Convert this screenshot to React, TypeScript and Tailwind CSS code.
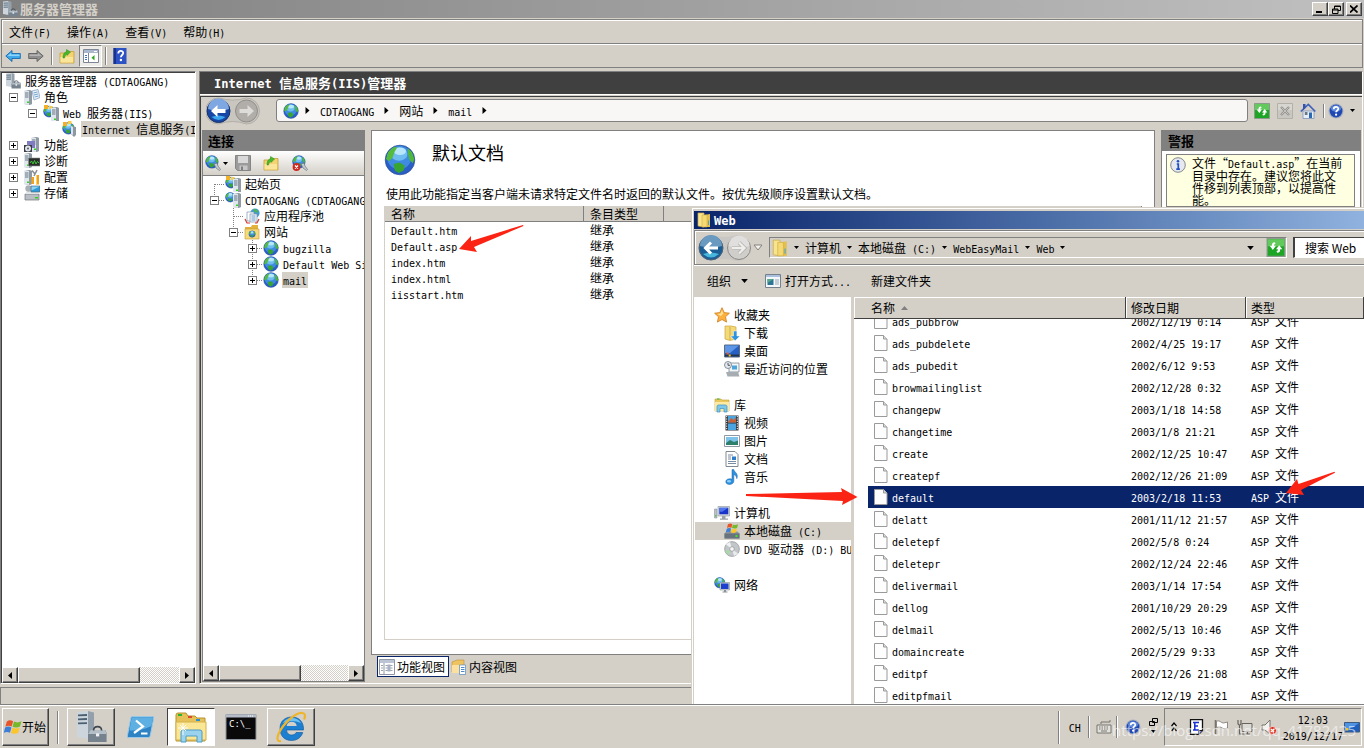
import React from 'react'

/* Latin runs use a 6px monospace so they line up as half of a 12px han character */
function Txt({ t, bold }: { t: string; bold?: boolean }) {
  return (
    <>
      {t.split(/([\x20-\x7e]+)/).filter(Boolean).map((part, i) =>
        /^[\x20-\x7e]+$/.test(part)
          ? <span key={i} className={bold ? "whitespace-pre font-['DejaVu_Sans_Mono',monospace] text-[12px] leading-none" : "whitespace-pre font-['DejaVu_Sans_Mono',monospace] text-[10px] leading-none"}>{part}</span>
          : part
      )}
    </>
  )
}

/* ---------- icons ---------- */

interface IconProps { className?: string }

function Svg({ children, className = 'h-4 w-4', box = '0 0 16 16' }: { children: React.ReactNode; className?: string; box?: string }) {
  return <svg viewBox={box} className={`shrink-0 ${className}`} aria-hidden="true">{children}</svg>
}

function GlobeShape() {
  return (
    <>
      <circle cx="8" cy="8" r="7.400" fill="#2a5fc6" />
      <circle cx="7.600" cy="6.800" r="6" fill="#3f8be0" />
      <ellipse cx="7.500" cy="5" rx="4.200" ry="3.400" fill="#6fbdf0" />
      <ellipse cx="8" cy="3.600" rx="3" ry="1.900" fill="#b8e6fa" />
      <path d="M1 7.500 2 4l3-2.600 1.600.4L5.200 4 4.400 6.600 2.600 8.600z" fill="#55bb3c" />
      <path d="M11.800 2 14 4l1.200 3.400-.8 2.200-1.600-1.600-.8-3z" fill="#4fb83a" />
      <path d="m4.800 10 3-.7 2.600 1.600-.6 2.400-2.400 1.200-2-1.200z" fill="#37a52f" />
      <circle cx="8" cy="8" r="7.400" fill="none" stroke="#2a4f9e" strokeWidth=".35" />
    </>
  )
}
const GlobeIcon = ({ className }: IconProps) => <Svg className={className}><GlobeShape /></Svg>

function Tower({ x = 0, y = 0 }: { x?: number; y?: number }) {
  return (
    <g transform={`translate(${x} ${y})`}>
      <path d="M0 1 5 0l3 1v13l-3 1-5-1z" fill="#9aa5b0" />
      <path d="M0 1h5v14l-5-1z" fill="#dfe6ec" />
      <path d="M5 0l3 1v13l-3 1z" fill="#8f9aa4" />
      <path d="M1 3h3.500M1 5h3.500M1 7h3.500" stroke="#5b6a78" strokeWidth=".9" />
      <path d="M3 11.500h2V13H3z" fill="#37d321" />
    </g>
  )
}

const ServerToolsIcon = ({ className }: IconProps) => (
  <Svg className={className}>
    <path d="M1 .5 6.500 0v14L1 13z" fill="#ccd5dc" /><path d="M6.500 0 9.500.7v12L6.500 14z" fill="#93a0ab" />
    <path d="M1.500 2.200 6 2M1.500 4.200 6 4M1.500 6.200 6 6.100" stroke="#4a6072" strokeWidth=".9" />
    <path d="m6.500 11 1.300-1.500h7.400l.6 1.500v4.500H6.500z" fill="#76838f" /><path d="m6.500 11.500 1.300-2h7.400l.6 2z" fill="#b3bec7" />
    <path d="M9.300 9.800q0-2 2-2t2 2" fill="none" stroke="#3f4852" strokeWidth=".8" /><path d="M10.500 11.200h1.600v1.500h-1.600z" fill="#eef2f4" />
  </Svg>
)
const RolesIcon = () => (
  <Svg><Tower x={0} y={1} /><path d="m8 2 6-1.500 2 8L10 11z" fill="#e6f1fb" stroke="#7d9ab8" strokeWidth=".7" /><path d="m9.500 4 4-1M10 6l4-1m-3.400 3 4-1" stroke="#5f8fc4" strokeWidth=".8" /></Svg>
)
const WebServerIcon = () => (
  <Svg>
    <g transform="translate(0 .5) scale(.76)"><GlobeShape /></g>
    <path d="M1 0h4v4H1z" fill="#f3b028" /><path d="M6 1h3.500v3H6z" fill="#f6ce4b" />
    <Tower x={8} y={2} />
  </Svg>
)
const IisManagerIcon = () => (
  <Svg>
    <g transform="translate(0 1) scale(.8)"><GlobeShape /></g>
    <path d="M1 1h4v4H1z" fill="#f3b028" /><path d="M6 0h3.500v3H6z" fill="#f6ce4b" />
    <path d="m9 5 5 1v8l-2 2-3-3z" fill="#8d98a3" /><path d="m9 5 2 1v8l-2-1z" fill="#dde3e8" />
  </Svg>
)
const SiteServerIcon = () => (
  <Svg><g transform="scale(.66)"><GlobeShape /></g><Tower x={8} y={1} /></Svg>
)
const FeaturesIcon = () => (
  <Svg><Tower x={7} y={0} /><path d="M3 4h8v7H3z" fill="#7f7cc4" /><path d="M0 8h8v7H0z" fill="#3a3a44" /><circle cx="4" cy="11.500" r="3" fill="#dfe3ea" /><circle cx="4" cy="11.500" r="1" fill="#555" /></Svg>
)
const DiagnosticsIcon = () => (
  <Svg><Tower x={0} y={0} /><path d="M4.500 5H16v8H4.500z" fill="#2a2d2a" stroke="#8c9196" strokeWidth=".6" /><path d="m6 10 1.500-2L9 11l1.500-3.500L12 11l1.500-2.500L15 10" fill="none" stroke="#3fd43a" strokeWidth=".9" /></Svg>
)
const ConfigIcon = () => (
  <Svg><Tower x={0} y={1} /><path d="M8 1.500 11 5M13 1l-3 6" stroke="#8b8f94" strokeWidth="1.600" /><path d="M7.500 8h2.500v7H7.500zM12 6h3v9.500h-3z" fill="#f0a41c" /><path d="M12 6h1v9.500h-1z" fill="#fbd26a" /></Svg>
)
const StorageIcon = () => (
  <Svg><path d="M1 9h14v6H1z" fill="#b8bec3" stroke="#6d757c" strokeWidth=".7" /><path d="m1 9 2-3h11l1 3z" fill="#e3e7ea" /><circle cx="4.500" cy="3.500" r="3.200" fill="#a9b0b6" /><path d="M7 1h9v6H7z" fill="#2e9bd8" stroke="#56616b" strokeWidth=".6" /><path d="M7.500 1.500h8l-8 4z" fill="#8fd3f3" /><path d="M11 12h3v1.500h-3z" fill="#37d321" /></Svg>
)
const AppPoolIcon = () => (
  <Svg><circle cx="11" cy="5" r="4.600" fill="#3f9bd6" /><path d="M9 1.500 12 1l2 3-2 1z" fill="#52b548" /><path d="M3 4h7v9H3z" fill="#fff" stroke="#7c94ad" strokeWidth=".7" /><path d="M6 6h7v8H6z" fill="#f4f8fc" stroke="#7c94ad" strokeWidth=".7" /><path d="M7.500 8h4m-4 2h4m-4 2h4" stroke="#4d7fb8" strokeWidth=".8" /><path d="m1 11 2 4h3M15 11l-2 4h-2" fill="none" stroke="#d33a2f" strokeWidth="1.200" /></Svg>
)
const SitesFolderIcon = () => (
  <Svg><path d="M1 3h6l1-2h6v14H1z" fill="#e2b23c" /><path d="M1 5h14v10H1z" fill="#f7d978" stroke="#c39a34" strokeWidth=".6" /><g transform="translate(4.500 6.500) scale(.45)"><GlobeShape /></g></Svg>
)
const FolderUpIcon = () => (
  <Svg><path d="M1 5h5l1-1.500h8V15H1z" fill="#f4d372" stroke="#c79f38" strokeWidth=".8" /><path d="M1.500 9H14v5.500H1.500z" fill="#fbe59b" /><path d="M4 10c0-4 1-5.500 3.500-6V1.500L11.500 4 8 7.500V6C6.500 6.500 6 8 5.500 10z" fill="#45b92c" stroke="#2d8a1c" strokeWidth=".5" /></Svg>
)
const ArrowLeftIcon = () => (
  <Svg><path d="M.8 8 7 2.500v3h8.300v5H7v3z" fill="#3ea8ea" stroke="#1669ad" strokeWidth=".9" /><path d="M2.500 8 6 5v1.500h8.500V8z" fill="#8fd4fa" /></Svg>
)
const ArrowRightIcon = () => (
  <Svg><path d="M15.200 8 9 2.500v3H.7v5H9v3z" fill="#8f8f8f" stroke="#606060" strokeWidth=".9" /><path d="M13.500 8 10 5v1.500H1.500V8z" fill="#b5b5b5" /></Svg>
)
const PanelIcon = ({ className }: IconProps) => (
  <Svg className={className}><path d="M.5 1.500h15v13H.5z" fill="#fff" stroke="#7d8798" /><path d="M1 2h14v3H1z" fill="#aab6cb" /><path d="M11 3.500h3" stroke="#fff" /><path d="M5.500 5v9" stroke="#7d8798" /><path d="M2 7.500h2M2 9.500h2M2 11.500h2" stroke="#4072c4" /><path d="M11.500 7v5.500l-3-2.700z" fill="#2fa41f" /></Svg>
)
const HelpBookIcon = () => (
  <Svg><path d="M1.500 0h13v16h-13z" fill="#2d52c4" /><path d="M1.500 0H4v16H1.500z" fill="#17338f" /><path d="M6.300 5.500c0-3.400 4.900-3.200 4.900-.5 0 2-2.300 2-2.300 4.300" fill="none" stroke="#fff" strokeWidth="1.800" /><circle cx="8.900" cy="12" r="1.200" fill="#fff" /></Svg>
)
const HelpRoundIcon = ({ className }: IconProps) => (
  <Svg className={className}><circle cx="8" cy="8" r="7.600" fill="#a9b0bd" /><circle cx="8" cy="8" r="6.400" fill="#1f48b4" /><ellipse cx="8" cy="5.500" rx="5" ry="3.300" fill="#5c87dc" /><path d="M5.700 6.200c0-3 4.600-2.900 4.600-.4 0 1.700-2.200 1.700-2.200 3.500" fill="none" stroke="#fff" strokeWidth="1.700" /><circle cx="8.100" cy="11.700" r="1.100" fill="#fff" /></Svg>
)
const InfoIcon = () => (
  <Svg><circle cx="8" cy="8" r="7.300" fill="#e6e9ef" stroke="#85898f" /><circle cx="8" cy="4.300" r="1.300" fill="#1f4fc0" /><path d="M6.800 7h1.500v5M6.300 12.200h3.600" fill="none" stroke="#1f4fc0" strokeWidth="1.700" /></Svg>
)
const ConnectIcon = ({ remove }: { remove?: boolean }) => (
  <Svg>
    <g transform="scale(.86)"><GlobeShape /></g>
    <path d="m9 9 3-1 1 3 2.500 3.500-1 1L11 13z" fill="#c2cbd2" stroke="#6d7780" strokeWidth=".7" />
    {remove && <><circle cx="4.500" cy="12" r="3.900" fill="#cf2a20" /><path d="m3 10.500 3 3m0-3-3 3" stroke="#fff" strokeWidth="1.300" /></>}
  </Svg>
)
const SaveIcon = () => (
  <Svg><path d="M.5.500h15v15h-13l-2-2z" fill="#9b9b9b" stroke="#858585" /><path d="M3 1h10v7H3z" fill="#d9d9d9" /><path d="M4.500 10.500h8V15h-8z" fill="#c6c6c6" /><path d="M6 11.500h2V15H6z" fill="#7f7f7f" /></Svg>
)
const RefreshIcon = ({ className }: IconProps) => (
  <Svg className={className}><path d="M.5.500h15v15H.5z" fill="#1da526" stroke="#8b9b8b" /><path d="M1 1h14v6H1z" fill="#62ca5c" /><path d="M7 3.500c-2 0-2.500 1-2.500 3H2.700L5.300 10 8 6.500H6.400c0-1 .1-1.500 1.200-1.500z" fill="#fff" /><path d="M9 12.500c2 0 2.500-1 2.500-3h1.800L10.700 6 8 9.500h1.600c0 1-.1 1.500-1.200 1.500z" fill="#fff" /></Svg>
)
const StopIcon = () => (
  <Svg><path d="M.5.500h15v15H.5z" fill="#c9c7c2" stroke="#b3b0aa" /><path d="M1 1h14v6H1z" fill="#d8d6d1" /><path d="m4 4 8 8m0-8-8 8" stroke="#969390" strokeWidth="2.400" /><path d="m4.500 4.500 7 7m0-7-7 7" stroke="#c9c7c2" strokeWidth=".9" /></Svg>
)
const HomeIcon = () => (
  <Svg><path d="M3 8h11v7.500H3z" fill="#e9eef6" stroke="#7e93b8" strokeWidth=".8" /><path d="m.8 8.500 7.500-7 7 7" fill="none" stroke="#3f62b8" strokeWidth="1.700" /><path d="M3 1h2.500v4L3 7z" fill="#3252ad" /><path d="M9 9.500h3V15H9z" fill="#2a68b4" /><path d="M4.800 9h2.700v3H4.800z" fill="#6b7785" /></Svg>
)
const FolderYellowIcon = ({ className = 'h-4 w-4' }: IconProps) => (
  <Svg className={className}><path d="M2 1h6v14l-6-1z" fill="#f8e38f" stroke="#cfae49" strokeWidth=".7" /><path d="m8 3 6-1v13H8z" fill="#e3bf4d" /><path d="M6 3h5v12H6z" fill="#f5d972" stroke="#cfae49" strokeWidth=".6" /><path d="M12 8.500h1V13h-1z" fill="#4ca5c9" /></Svg>
)
const StarIcon = () => (
  <Svg><path d="m8 .7 2.200 4.900 5.200.6-3.900 3.600 1.100 5.300L8 12.500l-4.600 2.600 1.100-5.300L.6 6.200l5.200-.6z" fill="#fcb040" stroke="#d07c18" strokeWidth=".8" /><path d="m8 3 1.300 3.500L7 9 3.500 7l3-.6z" fill="#fee29a" /></Svg>
)
const DownloadIcon = () => (
  <Svg><path d="M1 1h6l5 1v12l-6 1.500L1 14z" fill="#f4d977" stroke="#c9a440" strokeWidth=".7" /><path d="M6 2v13" stroke="#c9a440" strokeWidth=".8" /><path d="M9.500 6h3.400v5H16l-4.800 4.800L6.500 11h3z" fill="#2b93df" stroke="#fff" strokeWidth=".5" /></Svg>
)
const DesktopIcon = () => (
  <Svg><path d="M.5 2h15v12H.5z" fill="#2560c4" stroke="#5e6c80" /><path d="M1 2.500h14L6 10H1z" fill="#5d96e6" /><path d="M1 11.500h14v2H1z" fill="#23344f" /><path d="M2.500 9.500h2.200v2H2.500z" fill="#ef5a28" /><path d="M4.700 11.500h2v2h-2z" fill="#f8c722" /></Svg>
)
const RecentIcon = () => (
  <Svg><path d="M5 2h10v9H5z" fill="#f2f5f7" stroke="#7d8790" strokeWidth=".8" /><path d="M8 4.500h5v4H8z" fill="#4fa4d8" /><path d="M2 11h12l1.500 4.500h-12z" fill="#a5acb2" /><circle cx="4" cy="4" r="3.500" fill="#e2e9ee" stroke="#7d8790" strokeWidth=".9" /><path d="M4 2v2.300h2" fill="none" stroke="#334" strokeWidth=".8" /></Svg>
)
const LibraryIcon = ({ className }: IconProps) => (
  <Svg className={className}><path d="M1 2h6l1 1h7v11H1z" fill="#ecc95c" stroke="#c09a3a" strokeWidth=".6" /><path d="M1 5h14v9H1z" fill="#fbe9a4" /><path d="M3 1.500h2.500v1H3z" fill="#35b546" /><path d="M3 15V9.500q0-1.500 1.500-1.500h7Q13 8 13 9.500V15h-3v-3.500H6V15z" fill="#7cc7ec" stroke="#3d92c4" strokeWidth=".7" /></Svg>
)
const VideoIcon = () => (
  <Svg><path d="M1.500.5h13v15h-13z" fill="#30343a" /><path d="M4 1h8v6.500H4zM4 8.500h8V15H4z" fill="#49a4e0" /><path d="m4 7 3-4 3 2 2-3v5.500H4z" fill="#ca5f33" /><path d="M2.700 1v14M13.300 1v14" stroke="#fff" strokeDasharray="1.200 1.200" /></Svg>
)
const PictureIcon = () => (
  <Svg><path d="M.5 2.500h15v11H.5z" fill="#fff" stroke="#8e99a4" /><path d="M2 4h12v8H2z" fill="#7fc3ea" /><path d="m2 10 4-3 4 2 4-1.500V12H2z" fill="#2e7f6c" /></Svg>
)
const DocumentIcon = () => (
  <Svg><path d="M2 .5h9l3 3v12H2z" fill="#fff" stroke="#7f8993" /><path d="M4 4h5M4 6h3M4 8h3M4 10.500h8M4 12.500h8" stroke="#6b7f9a" strokeWidth=".9" /><path d="M8 5.500h4v3.500H8z" fill="#2f7dc8" /></Svg>
)
const MusicIcon = () => (
  <Svg><path d="M8 .5h1.800c.4 2.800 5 3.700 3 9.200-.1-2.600-1.600-3.700-3-3.900v6.500c0 4-8 4.200-8 .5 0-2.800 3.800-3.600 6.200-2.500z" fill="#2d8fdd" stroke="#1766ad" strokeWidth=".5" /><ellipse cx="5" cy="12.200" rx="2" ry="1.300" fill="#8ed0f8" /></Svg>
)
const ComputerIcon = () => (
  <Svg><path d="M.5 4H3v9H.5z" fill="#b9c0c6" stroke="#808890" strokeWidth=".5" /><path d="M1.300 10h1v1.500h-1z" fill="#37c321" /><path d="M4 1.500h11.500v9.500H4z" fill="#d8dcdf" stroke="#8a9299" strokeWidth=".6" /><path d="M5.300 2.800h9v6.500h-9z" fill="#1733c8" /><path d="M5.300 2.800h9l-6 4h-3z" fill="#4f74ec" /><path d="M8 11h3.500v2.500H14v1.300H6v-1.300h2z" fill="#9aa1a7" /></Svg>
)
const DiskIcon = () => (
  <Svg><path d="m.5 10.500 2-2h11l2 2v5H.5z" fill="#8d959c" /><path d="M.5 10.500h15v5H.5z" fill="#68737d" /><path d="M11.500 12h2v2h-2z" fill="#3fe52a" /><g transform="translate(2 -1) scale(.78)"><WindowsFlag /></g></Svg>
)
const DvdIcon = () => (
  <Svg><circle cx="8" cy="8" r="7.400" fill="#c3c6c9" stroke="#8f9498" strokeWidth=".7" /><path d="M8 8 2 3.500A7.400 7.400 0 0 1 6 1z" fill="#eef0f1" /><path d="m8 8 6 4.500a7.400 7.400 0 0 1-4 2.500z" fill="#e9ebed" /><path d="m1 10 4-1 1 2-2 3z" fill="#a8d8a8" /><circle cx="8" cy="8" r="2.300" fill="#f7f7f7" stroke="#8f9498" strokeWidth=".7" /></Svg>
)
const NetworkIcon = () => (
  <Svg><g transform="scale(.72)"><GlobeShape /></g><path d="M6 5.500h9.500V13H6z" fill="#cfd4d8" stroke="#8a9299" strokeWidth=".6" /><path d="M7 6.500h7.500V12H7z" fill="#1d3fce" /><path d="M10 13h2v1.500h1.500v1h-5v-1H10z" fill="#8a9299" /></Svg>
)
const OpenWithIcon = () => (
  <Svg><path d="M.5 1.500h15v13H.5z" fill="#f4f7fa" stroke="#76808c" /><path d="M1 2h14v2H1z" fill="#a9c1de" /><path d="M2.500 6h6v6h-6z" fill="#2d7592" /><path d="M2.500 6h6l-6 4z" fill="#57a88b" /><path d="M10 7h4m-4 2h4m-4 2h4" stroke="#98a6b6" /></Svg>
)
const FileIcon = () => (
  <Svg className="h-4 w-3.5" box="0 0 14 16"><path d="M.5.500h9l3.500 3.500v11.500H.5z" fill="#fdfdfd" stroke="#9a9a9a" /><path d="M9.500.500V4H13" fill="#d9d9d9" stroke="#9a9a9a" /></Svg>
)
const FeatureViewIcon = () => (
  <Svg><path d="M.5.500h15v15H.5z" fill="#fff" stroke="#8f97a6" /><path d="M1 1h14v3H1z" fill="#bcc5d6" /><path d="M5 4v11" stroke="#8f97a6" /><path d="M2 6.500h2M2 9h2M2 11.500h2M6.500 6.500h7M6.500 9h7m-7 2.500h7" stroke="#9aa3b2" /><path d="M8.500 5.500h3v7h-3z" fill="#a8b2c2" /></Svg>
)
const ContentViewIcon = () => (
  <Svg><path d="M1 3 6 1h7v12H1z" fill="#eec463" stroke="#c08f35" strokeWidth=".6" /><path d="M1 6h10v8H1z" fill="#fbe0a0" /><path d="M8.500 6h6v9.500h-6z" fill="#fff" stroke="#5588bb" strokeWidth=".7" /><path d="M10 8.500h3.500M10 10.500h3.500M10 12.500h3.500" stroke="#3c7dc4" strokeWidth=".9" /></Svg>
)

function WindowsFlag() {
  return (
    <>
      <path d="M2.500 3c2-1.300 3.600-1.200 5.600-.2L6.800 7.600C4.900 6.600 3.200 6.600 1.200 7.700z" fill="#e8542a" />
      <path d="M8.900 3.200c2 1 4 1 6.600-.3l-1.300 4.700c-2.500 1.200-4.600 1-6.600.2z" fill="#76b82a" />
      <path d="M1 8.500c2-1.100 3.700-1.100 5.600-.1l-1.300 4.800c-1.900-1-3.600-1-5.600.1z" fill="#3d7fd6" />
      <path d="M7.400 8.600c2 .9 4 1 6.600-.2l-1.300 4.800c-2.400 1.200-4.600 1-6.600.1z" fill="#fbc52d" />
    </>
  )
}

function NavArrows() {
  return (
    <svg viewBox="0 0 54 28" className="h-7 w-[54px] shrink-0" aria-hidden="true">
      <path d="M12.500 1q14 4 28 0a13 13 0 0 1 0 26q-14-5-28 0a13 13 0 0 1 0-26z" fill="#c9c6c0" stroke="#aaa7a1" strokeWidth=".8" />
      <circle cx="12.500" cy="14" r="11.500" fill="#1746a5" stroke="#163268" />
      <path d="M2 12a10.500 10.500 0 0 1 21 0q-10.500 4-21 0z" fill="#7fa7e2" />
      <path d="M5.500 20q7 6 14 0-7-3-14 0z" fill="#39a6ef" />
      <path d="m5 14 6.500-6v4h8v4h-8v4z" fill="#fff" />
      <circle cx="40.500" cy="14" r="11" fill="#b1aeaa" stroke="#918e89" />
      <path d="m48 14-6.500-6v4h-8v4h8v4z" fill="#dedcd8" />
    </svg>
  )
}

function ExplorerArrows() {
  return (
    <svg viewBox="0 0 54 28" className="h-7 w-[54px] shrink-0" aria-hidden="true">
      <path d="M14 1q13 4 26 0a13 13 0 0 1 0 26q-13-4-26 0a13 13 0 0 1 0-26z" fill="#c9c7c3" />
      <circle cx="14" cy="14" r="12" fill="#1b5e94" stroke="#4f6378" />
      <path d="M3 12a11 11 0 0 1 22 0q-11 3-22 0z" fill="#6a9ac0" />
      <path d="M6 20q8 7 16 0-8-3-16 0z" fill="#47b6dd" />
      <path d="M21 14H9m5-5.500L8.500 14l5.500 5.500" fill="none" stroke="#fff" strokeWidth="3" />
      <circle cx="42" cy="14" r="11.500" fill="#cfcecb" stroke="#8b8985" />
      <path d="M31.500 12a10.500 10.500 0 0 1 21 0q-10.500 3-21 0z" fill="#e0dfdd" />
      <path d="M35 14h12m-5-5.500 5.500 5.500-5.500 5.500" fill="none" stroke="#a9a7a3" strokeWidth="3.600" />
      <path d="M35 14h12m-5-5.500 5.500 5.500-5.500 5.500" fill="none" stroke="#efeeec" strokeWidth="2.400" />
    </svg>
  )
}

const CaretRight = () => <Svg className="h-[7px] w-[5px]" box="0 0 5 7"><path d="M.5 0v7L4.500 3.500z" fill="#000" /></Svg>
const CaretDown = ({ className = 'h-[3px] w-[5px]' }: IconProps) => <Svg className={className} box="0 0 5 3"><path d="M0 0h5L2.500 3z" fill="#000" /></Svg>

/* ---------- shared pieces ---------- */

const raised = 'border border-t-white border-l-white border-r-[#404040] border-b-[#404040] shadow-[inset_-1px_-1px_0_#808080]'
const sunken = 'border border-t-[#808080] border-l-[#808080] border-r-white border-b-white'

function Sep({ className = 'h-[15px]' }: IconProps) {
  return <div className={`w-0.5 shrink-0 border-r border-l border-r-white border-l-[#808080] ${className}`} />
}

/* A cell is a set of marks: + or - for the box, u/d/r for the dotted lines */
function TreeCell({ marks }: { marks: string }) {
  const has = (m: string) => marks.includes(m)
  return (
    <svg viewBox="0 0 19 16" className="h-4 w-[19px] shrink-0" shapeRendering="crispEdges" aria-hidden="true">
      <g stroke="#808080" strokeDasharray="1 1">
        {has('u') && <path d="M9.500 0v8" />}
        {has('d') && <path d="M9.500 8v8" />}
        {has('r') && <path d="M10 8.500h9" />}
      </g>
      {(has('+') || has('-')) && (
        <>
          <rect x="5.500" y="4.500" width="8" height="8" fill="#fff" stroke="#808080" />
          <path d="M7 8.500h5" stroke="#000" />
          {has('+') && <path d="M9.500 6v5" stroke="#000" />}
        </>
      )}
    </svg>
  )
}

interface TreeNode { cells: string[]; icon: React.ReactNode; label: string; selected?: boolean }

function Tree({ nodes }: { nodes: TreeNode[] }) {
  return (
    <ul className="min-h-0 flex-1 overflow-hidden pl-0.5">
      {nodes.map((n, i) => (
        <li key={i} className="flex h-4 items-center whitespace-nowrap">
          {n.cells.map((c, j) => <TreeCell key={j} marks={c} />)}
          <span className="ml-px flex">{n.icon}</span>
          <span className={n.selected ? 'ml-[3px] h-4 bg-[#d4d0c8] px-px' : 'ml-[3px] h-4 px-px'}><Txt t={n.label} /></span>
        </li>
      ))}
    </ul>
  )
}

function ScrollBar({ thumb }: { thumb: string }) {
  return (
    <div className="flex h-4 shrink-0 [background:repeating-conic-gradient(#fff_0_25%,#d4d0c8_0_50%)_0_0/2px_2px]">
      <button aria-label="向左滚动" className={`flex w-4 items-center justify-center bg-[#d4d0c8] ${raised}`}>
        <Svg className="h-[7px] w-1" box="0 0 4 7"><path d="M4 0v7L0 3.500z" /></Svg>
      </button>
      <div className={`bg-[#d4d0c8] ${raised} ${thumb}`} />
      <button aria-label="向右滚动" className={`ml-auto flex w-4 items-center justify-center bg-[#d4d0c8] ${raised}`}>
        <Svg className="h-[7px] w-1" box="0 0 4 7"><path d="M0 0v7l4-3.500z" /></Svg>
      </button>
    </div>
  )
}

/* ---------- data ---------- */

const serverTree: TreeNode[] = [
  { cells: [], icon: <ServerToolsIcon />, label: '服务器管理器 (CDTAOGANG)' },
  { cells: ['-'], icon: <RolesIcon />, label: '角色' },
  { cells: ['', '-'], icon: <WebServerIcon />, label: 'Web 服务器(IIS)' },
  { cells: ['', '', ''], icon: <IisManagerIcon />, label: 'Internet 信息服务(IIS)管理器', selected: true },
  { cells: ['+'], icon: <FeaturesIcon />, label: '功能' },
  { cells: ['+'], icon: <DiagnosticsIcon />, label: '诊断' },
  { cells: ['+'], icon: <ConfigIcon />, label: '配置' },
  { cells: ['+'], icon: <StorageIcon />, label: '存储' },
]

const siteTree: TreeNode[] = [
  { cells: ['dr'], icon: <WebServerIcon />, label: '起始页' },
  { cells: ['-ur'], icon: <SiteServerIcon />, label: 'CDTAOGANG (CDTAOGANG\\administrator)' },
  { cells: ['', 'udr'], icon: <AppPoolIcon />, label: '应用程序池' },
  { cells: ['', '-ur'], icon: <SitesFolderIcon />, label: '网站' },
  { cells: ['', '', '+udr'], icon: <GlobeIcon />, label: 'bugzilla' },
  { cells: ['', '', '+udr'], icon: <GlobeIcon />, label: 'Default Web Site' },
  { cells: ['', '', '+ur'], icon: <GlobeIcon />, label: 'mail', selected: true },
]

const defaultDocs = ['Default.htm', 'Default.asp', 'index.htm', 'index.html', 'iisstart.htm']

const places = [
  [
    { icon: <StarIcon />, label: '收藏夹' },
    { icon: <DownloadIcon />, label: '下载', child: true },
    { icon: <DesktopIcon />, label: '桌面', child: true },
    { icon: <RecentIcon />, label: '最近访问的位置', child: true },
  ],
  [
    { icon: <LibraryIcon />, label: '库' },
    { icon: <VideoIcon />, label: '视频', child: true },
    { icon: <PictureIcon />, label: '图片', child: true },
    { icon: <DocumentIcon />, label: '文档', child: true },
    { icon: <MusicIcon />, label: '音乐', child: true },
  ],
  [
    { icon: <ComputerIcon />, label: '计算机' },
    { icon: <DiskIcon />, label: '本地磁盘 (C:)', child: true, selected: true },
    { icon: <DvdIcon />, label: 'DVD 驱动器 (D:) BUILD', child: true },
  ],
  [{ icon: <NetworkIcon />, label: '网络' }],
] as { icon: React.ReactNode; label: string; child?: boolean; selected?: boolean }[][]

const files = [
  ['ads_pubbrow', '2002/12/19 0:14'],
  ['ads_pubdelete', '2002/4/25 19:17'],
  ['ads_pubedit', '2002/6/12 9:53'],
  ['browmailinglist', '2002/12/28 0:32'],
  ['changepw', '2003/1/18 14:58'],
  ['changetime', '2003/1/8 21:21'],
  ['create', '2002/12/25 10:47'],
  ['createpf', '2002/12/26 21:09'],
  ['default', '2003/2/18 11:53'],
  ['delatt', '2001/11/12 21:57'],
  ['deletepf', '2002/5/8 0:24'],
  ['deletepr', '2002/12/24 22:46'],
  ['delivermail', '2003/1/14 17:54'],
  ['dellog', '2001/10/29 20:29'],
  ['delmail', '2002/5/13 10:46'],
  ['domaincreate', '2002/5/29 9:33'],
  ['editpf', '2002/12/26 21:08'],
  ['editpfmail', '2002/12/19 23:21'],
]

/* ---------- server manager ---------- */

function TitleBar() {
  const btn = `flex h-3.5 w-4 items-center justify-center bg-[#d4d0c8] ${raised}`
  return (
    <header className="flex h-[18px] shrink-0 items-center bg-linear-to-r from-[#808080] to-[#c0c0c0] pr-0.5 pl-0.5">
      <ServerToolsIcon />
      <h1 className="ml-0.5 flex-1 text-[13px] leading-4 font-bold text-[#d4d0c8]">服务器管理器</h1>
      <button aria-label="最小化" className={btn}><Svg className="h-2 w-2" box="0 0 8 8"><path d="M0 6h6v2H0z" /></Svg></button>
      <button aria-label="还原" className={btn}><Svg className="h-[9px] w-[9px]" box="0 0 9 9"><path d="M2.500 1h6v4.500H6M2.500 1v3M.5 4h5.500v4.500H.5zM.5 5H6M2.500 1.500h6" fill="none" stroke="#000" /></Svg></button>
      <button aria-label="关闭" className={`ml-0.5 ${btn}`}><Svg className="h-2 w-2" box="0 0 8 8"><path d="m0 .5 7.500 7m0-7-7.500 7" stroke="#000" strokeWidth="1.700" /></Svg></button>
    </header>
  )
}

function MenuAndTools() {
  return (
    <div className="mx-px mt-px shrink-0 border border-[#808080]">
      <nav className="flex h-[23px] items-center gap-4 border-t border-l border-white pl-1.5">
        {['文件(F)', '操作(A)', '查看(V)', '帮助(H)'].map(m => <button key={m}><Txt t={m} /></button>)}
      </nav>
      <div className="flex h-6 items-center border-t border-[#808080] pl-[3px] shadow-[inset_0_1px_0_#fff]">
        <button aria-label="后退"><ArrowLeftIcon /></button>
        <button aria-label="前进" className="ml-[7px]"><ArrowRightIcon /></button>
        <Sep className="ml-[7px] h-[18px]" />
        <button aria-label="向上一级" className="ml-1.5"><FolderUpIcon /></button>
        <button aria-label="显示控制台树" className={`ml-1 flex h-[22px] w-[23px] items-center justify-center bg-[#eeece8] ${sunken}`}><PanelIcon /></button>
        <Sep className="ml-[3px] h-[18px]" />
        <button aria-label="帮助" className="ml-[5px]"><HelpBookIcon /></button>
      </div>
    </div>
  )
}

function IisNav() {
  return (
    <div className="mb-1.5 flex h-[27px] shrink-0 items-center pr-1.5 pl-1">
      <NavArrows />
      <div className="ml-4 flex h-[23px] flex-1 items-center rounded-[3px] border border-[#808080] bg-[#f8f7f5] pl-1.5">
        <GlobeIcon className="-mr-1 h-4 w-4" />
        {['CDTAOGANG', '网站', 'mail'].map(c => (
          <React.Fragment key={c}>
            <span className="flex w-[25px] justify-center"><CaretRight /></span>
            <button className="h-4"><Txt t={c} /></button>
          </React.Fragment>
        ))}
        <span className="flex w-[25px] justify-center"><CaretRight /></span>
      </div>
      <div className="ml-1.5 flex items-center gap-[7px]">
        <button aria-label="刷新"><RefreshIcon /></button>
        <button aria-label="停止"><StopIcon /></button>
        <button aria-label="主页"><HomeIcon /></button>
        <Sep className="h-3.5" />
      </div>
      <button aria-label="帮助" className="ml-[3px] flex items-center gap-1.5"><HelpRoundIcon /><CaretDown /></button>
    </div>
  )
}

function Connections() {
  return (
    <section className="flex w-[163px] shrink-0 flex-col border border-[#808080] bg-white">
      <h2 className="h-5 shrink-0 bg-[#808080] pl-[5px] text-[13px] leading-5 font-bold">连接</h2>
      <div className="flex h-[25px] shrink-0 items-center border-b border-[#808080] bg-linear-to-b from-white to-[#d4d0c8] pl-0.5">
        <button aria-label="连接到" className="flex items-center gap-0.5"><ConnectIcon /><CaretDown /></button>
        <button aria-label="保存连接" className="ml-[7px]"><SaveIcon /></button>
        <Sep className="ml-[7px]" />
        <button aria-label="向上" className="ml-[3px]"><FolderUpIcon /></button>
        <Sep className="ml-2" />
        <button aria-label="删除连接" className="ml-[3px]"><ConnectIcon remove /></button>
      </div>
      <Tree nodes={siteTree} />
      <ScrollBar thumb="w-[82px]" />
    </section>
  )
}

function DefaultDocuments() {
  const head = 'h-4 border-r border-b border-[#808080] pl-1.5 text-left leading-[15px] font-normal'
  return (
    <section className="flex min-w-0 flex-1 flex-col">
      <div className="flex min-h-0 flex-1 flex-col border border-[#808080] bg-white px-3 pt-[13px] pb-3.5">
        <div className="flex h-8 gap-4">
          <GlobeIcon className="h-8 w-8" />
          <h2 className="text-[18px] leading-4">默认文档</h2>
        </div>
        <p className="mt-2.5 mb-1 pl-0.5 whitespace-nowrap">使用此功能指定当客户端未请求特定文件名时返回的默认文件。按优先级顺序设置默认文档。</p>
        <div className="min-h-0 flex-1 border-b border-l border-[#d4d0c8]">
          <table className="w-full table-fixed border-separate border-spacing-0">
            <thead className="bg-[#d4d0c8]">
              <tr><th className={`w-[199px] ${head}`}>名称</th><th className={`w-20 ${head}`}>条目类型</th><th className={head} /></tr>
            </thead>
            <tbody>
              {defaultDocs.map(d => (
                <tr key={d} className="h-4">
                  <td className="p-0 pl-1.5"><div className="h-4"><Txt t={d} /></div></td>
                  <td className="p-0 pl-1.5"><div className="h-4">继承</div></td>
                  <td className="p-0" />
                </tr>
              ))}
            </tbody>
          </table>
        </div>
      </div>
      <div className="flex h-[27px] shrink-0 items-center gap-0.5 pb-1.5 pl-1.5">
        <button className="mt-0.5 flex h-[21px] items-center gap-0.5 border border-[#0a246a] bg-white pr-[3px] pl-px"><FeatureViewIcon />功能视图</button>
        <button className="mt-0.5 flex h-[21px] items-center gap-0.5"><ContentViewIcon />内容视图</button>
      </div>
    </section>
  )
}

function Alerts() {
  return (
    <aside className="mb-[27px] w-[200px] shrink-0 border border-[#808080] bg-white">
      <h2 className="h-5 bg-[#808080] pl-1.5 text-[13px] leading-5 font-bold">警报</h2>
      <div className="mt-[3px] mr-[5px] ml-1 flex gap-1.5 border border-[#808080] bg-[#ffffe1] pt-0.5 pr-2.5 pl-[3px]">
        <InfoIcon />
        <p className="leading-3"><Txt t="文件“Default.asp”在当前目录中存在。建议您将此文件移到列表顶部，以提高性能。" /></p>
      </div>
    </aside>
  )
}

/* ---------- explorer window ---------- */

function ExplorerNav() {
  return (
    <div className="flex h-[35px] shrink-0 items-center border-t border-b border-l border-[#808080] pl-0.5 shadow-[inset_1px_1px_0_#fff,0_1px_0_#fff]">
      <ExplorerArrows />
      <button aria-label="最近的页面" className="ml-0.5"><Svg className="h-2 w-2.5" box="0 0 10 8"><path d="M1 1h8L5 6z" fill="#f4f3f0" stroke="#85827c" /></Svg></button>
      <div className={`ml-1.5 flex h-[21px] flex-1 items-center pl-px ${sunken}`}>
        <FolderYellowIcon className="h-[18px] w-[18px]" />
        <span className="flex w-2.5 justify-end"><CaretDown /></span>
        {['计算机', '本地磁盘 (C:)', 'WebEasyMail', 'Web'].map(c => (
          <button key={c} className="flex items-center gap-1.5 pl-1.5"><span className="h-4"><Txt t={c} /></span><CaretDown /></button>
        ))}
        <button aria-label="以前的位置" className="mr-3 ml-auto"><CaretDown className="h-1 w-[7px]" /></button>
        <button aria-label="刷新"><RefreshIcon className="h-[19px] w-5" /></button>
      </div>
      <input aria-label="搜索" placeholder="搜索 Web" className="ml-1.5 h-[21px] w-[71px] shrink-0 border-t border-b border-l-2 border-t-[#404040] border-b-white border-l-[#404040] bg-white pl-2.5 outline-none placeholder:text-black" />
    </div>
  )
}

function Places() {
  return (
    <nav className="flex w-[157px] shrink-0 flex-col gap-[18px] overflow-hidden bg-white pt-[9px] pl-px">
      {places.map((group, i) => (
        <ul key={i}>
          {group.map(p => (
            <li key={p.label} className={p.selected ? 'bg-[#d4d0c8]' : ''}>
              <a href="#" className={p.child ? 'flex h-[18px] items-center gap-1 pl-[29px] whitespace-nowrap' : 'flex h-[18px] items-center gap-1 pl-[19px] whitespace-nowrap'}>
                {p.icon}<span><Txt t={p.label} /></span>
              </a>
            </li>
          ))}
        </ul>
      ))}
    </nav>
  )
}

function FileList() {
  const head = 'h-[22px] border-r border-b border-r-[#404040] border-b-[#404040] p-0 pl-[5px] text-left font-normal shadow-[inset_1px_1px_0_#fff]'
  return (
    <section className="flex min-w-0 flex-1 flex-col bg-white">
      <table className="w-full table-fixed border-separate border-spacing-0 bg-[#d4d0c8]">
        <thead>
          <tr>
            <th className={`w-[272px] ${head}`}><span className="flex items-center gap-1.5 pl-3">名称<Svg className="h-1 w-[7px]" box="0 0 7 4"><path d="M0 4h7L3.500 0z" fill="#808080" /></Svg></span></th>
            <th className={`w-[120px] ${head}`}>修改日期</th>
            <th className={head}>类型</th>
          </tr>
        </thead>
      </table>
      <div className="min-h-0 flex-1 overflow-hidden pl-3.5">
        <table className="-mt-[9px] w-full table-fixed border-collapse">
          <tbody>
            {files.map(([name, date]) => (
              <tr key={name} className={name === 'default' ? 'h-[22px] bg-[#0a246a] text-white' : 'h-[22px]'}>
                <td className="w-[258px] p-0 pl-1.5"><span className="flex items-center gap-1"><FileIcon /><span><Txt t={name} /></span></span></td>
                <td className="w-[120px] p-0 pl-[5px]"><Txt t={date} /></td>
                <td className="p-0 pl-[5px]"><Txt t="ASP 文件" /></td>
              </tr>
            ))}
          </tbody>
        </table>
      </div>
    </section>
  )
}

function Explorer() {
  return (
    <div className="absolute top-[207px] right-0 bottom-0 left-[691px] flex flex-col border-t border-l border-[#d4d0c8] bg-[#d4d0c8] pt-[3px] pl-0.5 shadow-[inset_1px_1px_0_#fff]">
      <header className="flex h-[18px] shrink-0 items-center gap-0.5 bg-linear-to-r from-[#0a246a] to-[#8fb2df] pl-0.5 text-white">
        <FolderYellowIcon />
        <h2 className="font-bold"><Txt t="Web" bold /></h2>
      </header>
      <div className="h-px shrink-0" />
      <ExplorerNav />
      <div className="flex h-8 shrink-0 items-center pl-[13px]">
        <button className="flex items-center gap-2.5">组织<CaretDown className="h-1 w-[7px]" /></button>
        <button className="ml-[17px] flex items-center gap-1"><OpenWithIcon /><span><Txt t="打开方式..." /></span></button>
        <button className="ml-5">新建文件夹</button>
      </div>
      <div className="flex min-h-0 flex-1 gap-[3px]">
        <Places />
        <FileList />
      </div>
    </div>
  )
}

/* ---------- taskbar ---------- */

function Taskbar() {
  const slot = 'flex h-[38px] w-12 items-center justify-center'
  return (
    <footer className="relative flex h-11 shrink-0 items-center border-t border-[#808080] bg-[#d4d0c8] pt-px pr-0.5 pl-0.5 shadow-[inset_0_1px_0_#fff]">
      <button className={`flex h-[38px] w-[47px] items-center pl-px ${raised}`}>
        <Svg className="h-[18px] w-[18px]"><WindowsFlag /></Svg>开始
      </button>
      <Sep className="mr-2 ml-2 h-[33px]" />
      <div className="flex gap-0.5">
        <button aria-label="服务器管理器" className={`${slot} ${raised}`}><ServerToolsIcon className="h-8 w-8" /></button>
        <button aria-label="PowerShell" className={slot}>
          <Svg className="h-8 w-8" box="0 0 32 32"><path d="M7.500 5.500h20q1.500 0 1.200 1.500l-3.500 18q-.3 1.500-2 1.500H3.500q-1.500 0-1.200-1.500l3.500-18q.3-1.500 1.700-1.500z" fill="#2d83c4" stroke="#9ac9e8" /><path d="M7.500 6.200h20q.7 0 .5 1L26.500 15q-10 5-22 4.500L6.500 7.200q.2-1 1-1z" fill="#5fb0e2" /><path d="m11 9.500 7 6-9 6.500" fill="none" stroke="#fff" strokeWidth="2.200" /><path d="M16 22.500h6.500" stroke="#fff" strokeWidth="2" /></Svg>
        </button>
        <button aria-label="资源管理器" className={`${slot} border border-t-[#404040] border-r-white border-b-white border-l-[#404040] bg-white`}>
          <Svg className="h-8 w-8" box="0 0 32 32"><path d="M1 4q0-2 2-2h8l2 3h7l2 2h8v23H1z" fill="#e5c158" stroke="#b8932f" /><path d="M1 11h30v18H1z" fill="#fae695" stroke="#d3b250" /><path d="M3 3h4v2H3z" fill="#25b33a" /><path d="M13 5h4v2h-4z" fill="#d94a30" /><path d="M21 8h4v2h-4z" fill="#2f8fd4" /><path d="M6 31V21q0-2 2-2h17q2 0 2 2v10h-5v-6H11v6z" fill="#9bd3ee" stroke="#4b9cc8" /><path d="M8 12v12M3 17h10M5 14l6 6m0-6-6 6" stroke="#fff" strokeWidth=".9" /></Svg>
        </button>
        <button aria-label="命令提示符" className={slot}>
          <svg viewBox="0 0 32 26" className="h-[26px] w-8" aria-hidden="true">
            <path d="M1 .5h30v25H1z" fill="#0a0a0a" stroke="#8d949c" /><path d="M1 .5h30v3H1z" fill="#b4bcc8" /><path d="M23 2h6" stroke="#fff" strokeDasharray="1 1" />
            <text x="4" y="13" fill="#fff" fontSize="9" fontFamily="'DejaVu Sans Mono', monospace">C:\_</text>
          </svg>
        </button>
        <button aria-label="Internet Explorer" className={`${slot} ${raised}`}>
          <Svg className="h-8 w-8" box="0 0 32 32"><path d="M28.500 19H11.500c.3 3.500 2.500 5 5.200 5 2.200 0 3.700-1 4.400-2.500h6.700C26.200 26.500 22 29.500 16.500 29.500 9.500 29.500 5 25 5 17.500S10 6 16.800 6s12.200 4.500 11.700 13z" fill="#1d7fd0" stroke="#0f559a" strokeWidth=".6" /><path d="M11.700 15h10c-.3-2.800-2.400-4.200-4.900-4.200s-4.700 1.400-5.100 4.200z" fill="#d4d0c8" /><path d="M8 12q3-5 9-5 6 0 9 5-9-4-18 0z" fill="#6cc3f3" /><path d="M29 8.500c1.500-3 1.500-6-1.500-6.500C21 1 8 12.500 3.500 23c-2 5-1 8 2.500 7" fill="none" stroke="#eeb52a" strokeWidth="2.200" /></Svg>
        </button>
      </div>
      <div className="ml-auto flex items-center">
        <Sep className="h-[33px]" />
        <button className="ml-[9px]"><Txt t="CH" /></button>
        <Sep className="ml-[7px] h-[22px]" />
        <button aria-label="键盘" className="ml-1.5">
          <Svg><path d="M1 6h14v8H1z" fill="#e3e1dc" stroke="#77746e" /><path d="M3 8h10M3 10h10" stroke="#77746e" strokeDasharray="1.500 1" /><path d="M5 12h6M5 5V3h9V1" fill="none" stroke="#77746e" /></Svg>
        </button>
        <Sep className="ml-1 h-[22px]" />
        <button aria-label="帮助" className="ml-[7px]"><HelpRoundIcon /></button>
        <button aria-label="语言栏选项" className="ml-2 flex flex-col items-center gap-1 pb-1">
          <Svg className="h-2 w-2.5" box="0 0 10 8"><path d="M3.500.500h5v4h-5zM.5 3.500h5v4h-5z" fill="#d4d0c8" stroke="#000" /></Svg>
          <CaretDown />
        </button>
        <div className={`ml-[5px] flex h-[38px] items-center pr-px pl-1.5 ${sunken}`}>
          <button aria-label="显示隐藏的图标"><Svg className="h-2.5 w-1.5" box="0 0 6 10"><path d="m.5 4 2.500-3 2.500 3M.5 9 3 6l2.500 3" fill="none" stroke="#000" strokeWidth="1.200" /></Svg></button>
          <div className="ml-3 flex gap-2">
            <Svg><path d="M1.500.500h12v11l-4 4h-8z" fill="#fff" stroke="#111" strokeWidth="1.300" /><path d="M4 3.500h6M5 7h4M4 11h6M5.800 3v8" stroke="#1a2fd0" strokeWidth="1.500" /><path d="M13.500 11.500h-4v4" fill="#8a8ae0" stroke="#111" /></Svg>
            <Svg><path d="M2.500 1v14" stroke="#77746e" strokeWidth="1.600" /><path d="M3.500 2c4-1 4 2 7 2l4-1v6c-4 1.500-5 0-6-.5-2-.8-3-.5-5 0z" fill="#fff" stroke="#77746e" strokeWidth=".8" /></Svg>
            <Svg><path d="M5 4.500h10v8H5z" fill="#dcdad5" stroke="#66635e" /><path d="M8 15h5M10.500 13v2M1 1v3q0 2 1.500 2T4 4V1M2.500 6v9H8" fill="none" stroke="#66635e" strokeWidth="1.200" /></Svg>
            <Svg><path d="M1 6h3l5-5v14l-5-4H1z" fill="#f2f1ee" stroke="#77746e" /><circle cx="11.500" cy="11.500" r="4" fill="#d92c1f" stroke="#fff" strokeWidth=".7" /><path d="m10 10 3 3m0-3-3 3" stroke="#fff" strokeWidth="1.200" /></Svg>
          </div>
          <time className="ml-1.5 flex flex-col items-center"><span><Txt t="12:03" /></span><span><Txt t="2019/12/17" /></span></time>
          <button aria-label="显示桌面" className="ml-px"><Svg><path d="M.5 3.500h15v9.500H.5z" fill="#1c5fbe" stroke="#3d5a80" /><path d="M1 4h14l-7 5H1z" fill="#4f93e2" /><path d="M2 9h2.500v2.500H2z" fill="#f4c430" /></Svg></button>
        </div>
      </div>
      <p className="pointer-events-none absolute right-2 bottom-2 font-['Open_Sans',sans-serif] text-[15px] leading-5 text-white/60">https://blog.csdn.net/qq_41782425</p>
    </footer>
  )
}

/* Red pointers drawn over both windows */
function Pointers() {
  return (
    <>
      <svg viewBox="0 0 65 28" className="absolute top-[224px] left-[459px] h-7 w-[65px]" aria-hidden="true"><path d="m0 25 12-13v5L64 1l.5 1L15 23l3 5z" fill="#fb2414" /></svg>
      <svg viewBox="0 0 112 18" className="absolute top-[488px] left-[746px] h-[18px] w-28" aria-hidden="true"><path d="m0 6 96-2-1-4 16.500 9L96 17l1-4L0 8z" fill="#fb2414" /></svg>
      <svg viewBox="0 0 50 25" className="absolute top-[471px] left-[1286px] h-[25px] w-[50px]" aria-hidden="true"><path d="M0 22 11 8l1.500 5L48.500.7l.5 1L15 19l3 5z" fill="#fb2414" /></svg>
    </>
  )
}

export default function App() {
  return (
    <div className="flex h-screen flex-col overflow-hidden bg-[#d4d0c8] font-['Noto_Sans_CJK_SC',sans-serif] text-[12px] leading-4 text-black">
      <main className="relative flex min-h-0 flex-1 flex-col">
        <TitleBar />
        <MenuAndTools />
        <div className="mt-[3px] flex min-h-0 flex-1 gap-[3px] pr-px">
          <section className={`flex w-[196px] shrink-0 ${sunken}`}>
            <div className="flex min-w-0 flex-1 flex-col border-t border-l border-[#404040] bg-white">
              <Tree nodes={serverTree} />
              <ScrollBar thumb="w-[122px]" />
            </div>
          </section>
          <section className={`flex min-w-0 flex-1 flex-col ${sunken}`}>
            <h2 className="mb-px h-[23px] shrink-0 border-b border-white bg-[#404040] pl-3.5 text-[13px] leading-[22px] font-bold text-white"><Txt t="Internet 信息服务(IIS)管理器" bold /></h2>
            <div className="flex min-h-0 flex-1 flex-col border-t border-l border-[#404040] pr-px pb-px pl-px">
              <IisNav />
              <div className="flex min-h-0 flex-1 gap-1.5">
                <Connections />
                <DefaultDocuments />
                <Alerts />
              </div>
            </div>
          </section>
        </div>
        <div className="mt-[3px] h-[17px] shrink-0 border-t border-l border-[#808080]" />
        <Explorer />
        <Pointers />
      </main>
      <Taskbar />
    </div>
  )
}
